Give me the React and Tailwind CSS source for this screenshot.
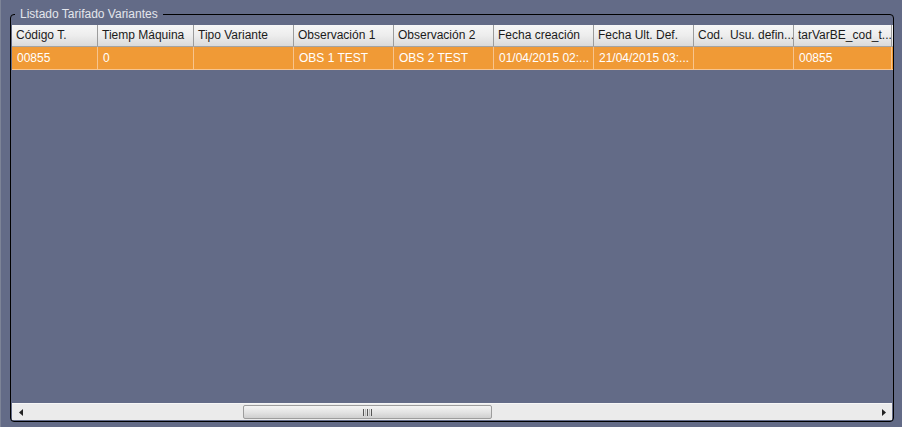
import React from 'react';

const columns = [
    { title: 'Código T.', value: '00855', w: 'w-[86px]' },
    { title: 'Tiemp Máquina', value: '0', w: 'w-[96px]' },
    { title: 'Tipo Variante', value: '', w: 'w-[100px]' },
    { title: 'Observación 1', value: 'OBS 1 TEST', w: 'w-[100px]' },
    { title: 'Observación 2', value: 'OBS 2 TEST', w: 'w-[100px]' },
    { title: 'Fecha creación', value: '01/04/2015 02:...', w: 'w-[100px]' },
    { title: 'Fecha Ult. Def.', value: '21/04/2015 03:...', w: 'w-[100px]' },
    { title: 'Cod.  Usu. defin...', value: '', w: 'w-[100px]' },
    { title: 'tarVarBE_cod_t...', value: '00855', w: 'w-[98px]' },
];

const App = () => {
    return (
        <div
            className='w-[902px] h-[427px] bg-[#636b87] flex border-l border-l-[#7d8497] pl-[9px] pt-[7px]'
            style={{ fontFamily: '"Liberation Sans", Arial, sans-serif' }}
        >
            <fieldset className='w-[884px] h-[415px] border border-black rounded-[4px]'>
                <legend className='ml-[4px] px-[5px] text-[12px] leading-[14px] text-[#e4e6ec]'>Listado Tarifado Variantes</legend>

                <div className='flex flex-col h-[399px] pl-[1px] pt-[4px]'>
                    {/* header */}
                    <div className='flex h-[22px] border-b border-[#a3a3a3] bg-gradient-to-b from-[#f7f7f7] via-[#ededed] to-[#dadada]'>
                        {columns.map((c) => (
                            <div key={c.title} className={`${c.w} shrink-0 border-r border-[#9c9c9c] pl-[4px] text-[12px] leading-[21px] text-[#1b1b1b] whitespace-pre overflow-hidden`}>
                                {c.title}
                            </div>
                        ))}
                    </div>

                    {/* selected row */}
                    <div className='flex h-[23px] bg-[#f09a36] border-b border-[#f7c48e]'>
                        {columns.map((c) => (
                            <div key={c.title} className={`${c.w} shrink-0 border-r border-[#f7c48e] pl-[5px] text-[12px] leading-[22px] text-white whitespace-pre overflow-hidden`}>
                                {c.value}
                            </div>
                        ))}
                    </div>

                    <div className='flex-1' />

                    {/* horizontal scrollbar */}
                    <div className='flex items-center h-[17px] w-[880px] bg-[#ebebeb] border-t border-[#f6f6f6]'>
                        <div className='w-[17px] h-full flex items-center justify-center'>
                            <svg width='4' height='7' viewBox='0 0 4 7'><path d='M4 0 L0 3.5 L4 7 Z' fill='#222' /></svg>
                        </div>
                        <div className='flex-1 h-full flex items-center pl-[214px]'>
                            <div className='w-[249px] h-[14px] rounded-[2px] border border-[#9d9d9d] bg-gradient-to-b from-[#f4f4f4] via-[#e4e4e4] to-[#cfcfcf] flex items-center justify-center gap-[1px]'>
                                <span className='w-[1px] h-[7px] bg-[#555]' />
                                <span className='w-[1px] h-[7px] bg-[#bbb]' />
                                <span className='w-[1px] h-[7px] bg-[#555]' />
                                <span className='w-[1px] h-[7px] bg-[#bbb]' />
                                <span className='w-[1px] h-[7px] bg-[#555]' />
                            </div>
                        </div>
                        <div className='w-[17px] h-full flex items-center justify-center'>
                            <svg width='4' height='7' viewBox='0 0 4 7'><path d='M0 0 L4 3.5 L0 7 Z' fill='#222' /></svg>
                        </div>
                    </div>
                </div>
            </fieldset>
        </div>
    );
};

export default App;
